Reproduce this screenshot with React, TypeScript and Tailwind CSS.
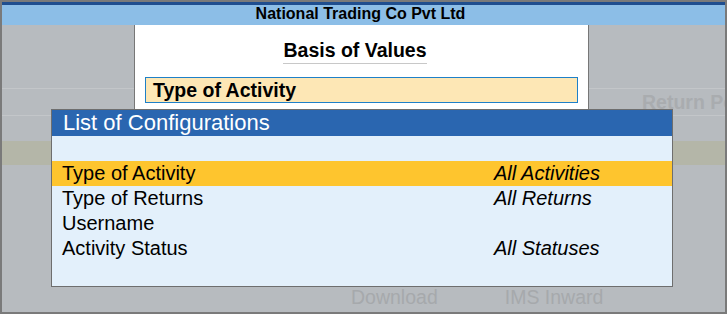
const font = { fontFamily: '"Liberation Sans", Arial, sans-serif' };

type ConfigRow = { label: string; value: string; active?: boolean };

const rows: ConfigRow[] = [
  { label: 'Type of Activity', value: 'All Activities', active: true },
  { label: 'Type of Returns', value: 'All Returns' },
  { label: 'Username', value: '' },
  { label: 'Activity Status', value: 'All Statuses' },
];

// Gray side column with the faint row lines and the olive band
function SideColumn({ children }: { children?: React.ReactNode }) {
  return (
    <div className="flex flex-col bg-[#b7bbbf]">
      <div className="h-[63px]" />
      <div className="h-px bg-[#c3c6c9]" />
      <div className="h-[26px] overflow-hidden whitespace-nowrap">{children}</div>
      <div className="h-px bg-[#c3c6c9]" />
      <div className="h-[25px]" />
      <div className="h-[24px] bg-[#b4b6a8]" />
    </div>
  );
}

export default function App() {
  return (
    <div
      className="relative w-[727px] h-[314px] border-2 border-[#7a7a7a] bg-[#b7bbbf] flex flex-col overflow-hidden"
      style={font}
    >
      {/* Title strip */}
      <div className="h-[3px] bg-[#1f4e8f]" />
      <div className="h-[20px] bg-[#8cbee7] flex justify-center pr-[6px]">
        <span className="text-[16px] leading-[17px] font-bold text-black">National Trading Co Pvt Ltd</span>
      </div>

      {/* Background screen */}
      <div className="flex-1 flex flex-col">
        <div className="flex h-[140px]">
          <div className="w-[132px] shrink-0">
            <SideColumn />
          </div>
          <div className="w-[455px] shrink-0 bg-white border-x border-[#777] flex flex-col items-center">
            <div className="mt-[12px] mr-[13px] text-[19.5px] leading-[26px] font-bold text-black border-b border-[#c8c8c8]">
              Basis of Values
            </div>
            <div className="mt-[13px] self-stretch mx-[10px] h-[26px] border border-[#1e80c8] bg-[#fde7b5] pl-[7px] text-[19.5px] leading-[24px] font-bold text-black">
              Type of Activity
            </div>
          </div>
          <div className="flex-1 min-w-0">
            <SideColumn>
              <span className="ml-[53px] text-[19.5px] leading-[26px] font-bold text-[#a9acaf]">Return Period</span>
            </SideColumn>
          </div>
        </div>
        <div className="flex-1 flex items-end pb-[2px] text-[19.5px] leading-[26px] text-[#a6a9ac]">
          <span className="ml-[349px]">Download</span>
          <span className="ml-[67px]">IMS Inward</span>
        </div>
      </div>

      {/* Configuration list popup */}
      <div className="absolute left-[49px] top-[107px] w-[622px] h-[178px] border border-[#6e6e6e] bg-[#e3f0fb] flex flex-col">
        <div className="h-[26px] bg-[#2a66b0] pl-[11px] text-[22px] leading-[26px] text-white">
          List of Configurations
        </div>
        <div className="h-[25px]" />
        {rows.map((row) => (
          <div
            key={row.label}
            className={`h-[25px] flex text-[20px] leading-[24px] text-black ${row.active ? 'bg-[#fec52e]' : ''}`}
          >
            <span className="w-[442px] pl-[10px]">{row.label}</span>
            <span className="italic">{row.value}</span>
          </div>
        ))}
      </div>
    </div>
  );
}
